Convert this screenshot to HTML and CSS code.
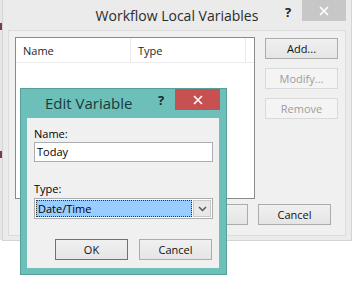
FILE: index.html
```html
<!DOCTYPE html>
<html>
<head>
<meta charset="utf-8">
<link rel="stylesheet" href="styles.css">
</head>
<body>
<div class="behind"><i class="m1"></i><i class="m2"></i></div>
<div class="outer">
  <div class="otitle">
    <span class="otext">Workflow Local Variables</span>
    <span class="ohelp">?</span>
    <span class="oclose"><svg width="10" height="10" viewBox="0 0 10 10"><path d="M1 1L9 9M9 1L1 9" stroke="#fff" stroke-width="1.6"/></svg></span>
  </div>
  <div class="opanel">
    <div class="olist">
      <div class="lhead">
        <div class="col c1">Name</div>
        <div class="col c2">Type</div>
        <div class="col c3"></div>
      </div>
    </div>
    <div class="obtns">
      <div class="btn">Add...</div>
      <div class="btn dis">Modify...</div>
      <div class="btn dis">Remove</div>
    </div>
    <div class="obottom">
      <div class="btn">OK</div>
      <div class="btn">Cancel</div>
    </div>
  </div>
</div>

<div class="edit">
  <div class="etitle">
    <span class="etext">Edit Variable</span>
    <span class="ehelp">?</span>
    <span class="eclose"><svg width="10" height="10" viewBox="0 0 10 10"><path d="M1 1L9 9M9 1L1 9" stroke="#fff" stroke-width="1.6"/></svg></span>
  </div>
  <div class="eclient">
    <div class="lbl lname">Name:</div>
    <div class="input">Today</div>
    <div class="lbl ltype">Type:</div>
    <div class="combo">
      <div class="csel"><span>Date/Time</span></div>
      <div class="cbtn"><svg width="9" height="6" viewBox="0 0 9 6"><path d="M1 1L4.5 4.5L8 1" fill="none" stroke="#555" stroke-width="1.5"/></svg></div>
    </div>
    <div class="ebtns">
      <div class="btn def">OK</div>
      <div class="btn">Cancel</div>
    </div>
  </div>
</div>
</body>
</html>
```

FILE: styles.css
```css
* { box-sizing: border-box; }
html, body { margin: 0; padding: 0; }
body {
  width: 354px;
  height: 284px;
  background: #ffffff;
  font-family: "Open Sans", "Noto Sans", sans-serif;
  font-size: 11px;
  color: #000;
  position: relative;
  overflow: hidden;
}
.behind {
  position: absolute;
  left: 0; top: 0;
  width: 2px; height: 240px;
  background: #e6e6e6;
}
.behind i { position: absolute; left: 0; width: 2px; height: 7px; background: #7a3a48; }
.behind .m1 { top: 23px; }
.behind .m2 { top: 151px; }
.outer {
  margin-left: 2px;
  width: 350px;
  height: 241px;
  background: #ebebeb;
  border: 1px solid #d4d4d4;
  border-top: none;
  display: flex;
  flex-direction: column;
}
.otitle {
  height: 30px;
  position: relative;
  display: flex;
  justify-content: center;
  align-items: center;
}
.otext {
  font-size: 14px;
  color: #2b2b2b;
  padding-top: 1px;
}
.ohelp {
  position: absolute;
  left: 282px; top: 3px;
  font-weight: bold;
  font-size: 13px;
  color: #222;
}
.oclose {
  position: absolute;
  left: 299px; top: 0;
  width: 44px; height: 21px;
  background: #c7c7c7;
  display: flex;
  align-items: center;
  justify-content: center;
}
.opanel {
  margin-left: 5px;
  width: 338px;
  height: 206px;
  background: #f0f0f0;
  border: 1px solid #dcdcdc;
  display: grid;
  grid-template-columns: 240px 73px;
  grid-template-rows: 162px auto;
  column-gap: 10px;
  padding: 6px 0 0 6px;
}
.olist {
  background: #fff;
  border: 1px solid #8a8a8a;
}
.lhead {
  height: 25px;
  display: flex;
  border-bottom: 1px solid #ebebeb;
}
.col {
  padding: 5px 0 0 7px;
  color: #1e1e1e;
  border-right: 1px solid #ebebeb;
}
.c1 { width: 115px; }
.c2 { width: 115px; }
.c3 { flex: 1; border-right: none; }
.obtns {
  display: flex;
  flex-direction: column;
  gap: 9px;
  padding-top: 1px;
}
.obottom {
  grid-column: 1 / 3;
  display: flex;
  justify-content: flex-end;
  gap: 10px;
  padding-top: 5px;
  padding-right: 7px;
}
.btn {
  width: 73px;
  height: 21px;
  border: 1px solid #acacac;
  background: linear-gradient(#f0f0f0, #e5e5e5);
  display: flex;
  align-items: center;
  justify-content: center;
  color: #111;
  padding-bottom: 1px;
}
.btn.dis {
  border-color: #d9d9d9;
  background: #f4f4f4;
  color: #9c9c9c;
}
.btn.def {
  border-color: #3c7fb1;
}
.edit {
  position: absolute;
  left: 20px;
  top: 88px;
  width: 207px;
  height: 187px;
  background: #6cc0b9;
  border: 1px solid #579f99;
  display: flex;
  flex-direction: column;
}
.etitle {
  height: 29px;
  position: relative;
}
.etext {
  position: absolute;
  left: 24px;
  top: 4px;
  font-size: 15px;
  color: #1a3a38;
}
.ehelp {
  position: absolute;
  left: 137px; top: 2px;
  font-weight: bold;
  font-size: 13px;
  color: #1a2a2a;
}
.eclose {
  position: absolute;
  left: 154px; top: 0;
  width: 45px; height: 21px;
  background: #c75050;
  display: flex;
  align-items: center;
  justify-content: center;
}
.eclient {
  margin-left: 6px;
  width: 192px;
  height: 150px;
  background: #f0f0f0;
  padding: 6px 6px 0 7px;
  display: flex;
  flex-direction: column;
}
.lbl { height: 17px; line-height: 17px; }
.lname { margin-top: 1px; }
.input {
  margin-top: 0;
  height: 20px;
  width: 179px;
  background: #fff;
  border: 1px solid #abadb3;
  padding-left: 2px;
  line-height: 17px;
  color: #000;
}
.ltype { margin-top: 18px; }
.combo {
  margin-top: 1px;
  width: 179px;
  height: 21px;
  border: 1px solid #acacac;
  background: #fff;
  display: flex;
  padding: 1px;
  gap: 1px;
}
.csel {
  flex: 1;
  background: #99ccff;
  border: 1px dotted #333;
  line-height: 15px;
  padding-left: 1px;
}
.cbtn {
  width: 18px;
  border: 1px solid #c8c8c8;
  background: #e8e8e8;
  display: flex;
  align-items: center;
  justify-content: center;
}
.ebtns {
  display: flex;
  gap: 11px;
  margin-top: 20px;
  padding-left: 21px;
}
```
